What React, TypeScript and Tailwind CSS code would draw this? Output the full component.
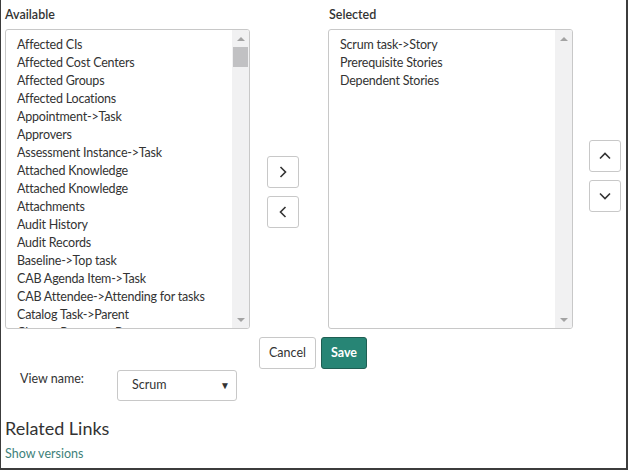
import React from "react";

const available = [
  "Affected CIs",
  "Affected Cost Centers",
  "Affected Groups",
  "Affected Locations",
  "Appointment->Task",
  "Approvers",
  "Assessment Instance->Task",
  "Attached Knowledge",
  "Attached Knowledge",
  "Attachments",
  "Audit History",
  "Audit Records",
  "Baseline->Top task",
  "CAB Agenda Item->Task",
  "CAB Attendee->Attending for tasks",
  "Catalog Task->Parent",
  "Change Request->Parent",
];

const selected = ["Scrum task->Story", "Prerequisite Stories", "Dependent Stories"];

function Scrollbar({ thumb }: { thumb?: boolean }) {
  return (
    <div className="w-[17px] h-full bg-[#f1f1f2] flex flex-col items-center">
      <div className="h-[17px] w-full flex items-center justify-center">
        <div className="w-0 h-0 border-l-[4px] border-r-[4px] border-b-[4px] border-l-transparent border-r-transparent border-b-[#a3a3a3]" />
      </div>
      {thumb && <div className="w-[15px] h-[20px] bg-[#c1c1c3]" />}
      <div className="flex-1" />
      <div className="h-[17px] w-full flex items-center justify-center">
        <div className="w-0 h-0 border-l-[4px] border-r-[4px] border-t-[4px] border-l-transparent border-r-transparent border-t-[#a3a3a3]" />
      </div>
    </div>
  );
}

function ListBox({ items, thumb }: { items: string[]; thumb?: boolean }) {
  return (
    <div className="h-[300px] w-[245px] border border-[#c8c8c8] rounded-[3px] flex overflow-hidden bg-white">
      <div className="flex-1 pt-[6px] pl-[11px] overflow-hidden">
        {items.map((t, i) => (
          <div
            key={i}
            className="h-[18px] leading-[18px] text-[12.5px] tracking-[-0.2px] text-[#333] whitespace-nowrap"
          >
            {t}
          </div>
        ))}
      </div>
      <Scrollbar thumb={thumb} />
    </div>
  );
}

function IconButton({ d }: { d: string }) {
  return (
    <button className="w-[32px] h-[32px] border border-[#c8c8c8] rounded-[3px] bg-white flex items-center justify-center">
      <svg width="16" height="16" viewBox="0 0 16 16">
        <polyline points={d} fill="none" stroke="#333" strokeWidth="1.6" />
      </svg>
    </button>
  );
}

export default function App() {
  return (
    <div
      className="w-[628px] h-[470px] bg-white border-l border-r-2 border-b-2 border-[#3c3c3c] overflow-hidden text-[#333]"
      style={{ fontFamily: "Lato, 'Open Sans', sans-serif" }}
    >
      <div className="flex pl-[4px]">
        {/* Available */}
        <div className="flex flex-col">
          <div className="h-[29px] pt-[6px] text-[12.5px] font-semibold leading-[18px]">Available</div>
          <ListBox items={available} thumb />
        </div>

        {/* move buttons */}
        <div className="w-[78px] pl-[17px] pt-[156px] flex flex-col gap-[8px]">
          <IconButton d="5.5,3 10.5,8 5.5,13" />
          <IconButton d="10.5,3 5.5,8 10.5,13" />
        </div>

        {/* Selected */}
        <div className="flex flex-col">
          <div className="h-[29px] pt-[6px] pl-[1px] text-[12.5px] font-semibold leading-[18px]">Selected</div>
          <ListBox items={selected} />
        </div>

        {/* order buttons */}
        <div className="pl-[16px] pt-[140px] flex flex-col gap-[8px]">
          <IconButton d="3,10.5 8,5.5 13,10.5" />
          <IconButton d="3,5.5 8,10.5 13,5.5" />
        </div>
      </div>

      <div className="flex justify-center gap-[5px] mt-[8px] pr-[1px]">
        <button className="h-[32px] w-[57px] border border-[#c8c8c8] rounded-[3px] bg-white text-[12.5px] text-[#333]">
          Cancel
        </button>
        <button className="h-[32px] w-[46px] border border-[#1f5e53] rounded-[3px] bg-[#278575] text-[12.5px] font-bold text-white">
          Save
        </button>
      </div>

      <div className="flex items-start mt-[1px]">
        <div className="w-[116px] pl-[19px] pt-[1px] text-[12.5px] leading-[16px]">View name:</div>
        <div className="w-[120px] h-[31px] border border-[#c8c8c8] rounded-[3px] flex items-center pl-[14px] pr-[6px]">
          <span className="flex-1 text-[12.5px]">Scrum</span>
          <span className="text-[10px]">▼</span>
        </div>
      </div>

      <div className="pl-[4px] mt-[16px] text-[18px] leading-[22px]">Related Links</div>
      <div className="pl-[4px] mt-[7px] text-[12.5px] leading-[16px] text-[#3e7f7a]">Show versions</div>
    </div>
  );
}
